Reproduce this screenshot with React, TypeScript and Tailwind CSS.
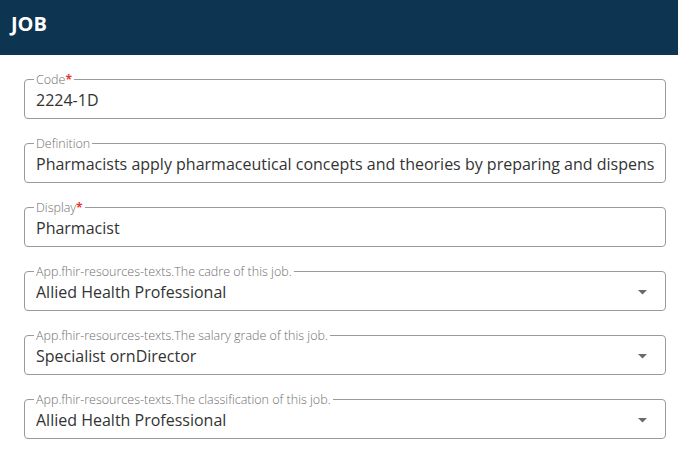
import React from "react";

const font = { fontFamily: '"Open Sans", "Noto Sans", sans-serif' };

function Field({
  label,
  value,
  required,
  select,
}: {
  label: string;
  value: string;
  required?: boolean;
  select?: boolean;
}) {
  return (
    <div className="relative h-[40px] rounded-[4px] border border-[#9a9a9a]">
      <div className="absolute left-[9px] -top-[6px] bg-white px-[2px] text-[12.5px] leading-[12px] font-light text-[#6f6f6f] whitespace-nowrap">
        {label}
        {required && <span className="text-[#e53935] font-bold text-[12px]">*</span>}
      </div>
      <div className={`flex items-center h-full pl-[11px] pt-[2px] ${select ? "pr-[18px]" : "pr-[10px]"}`}>
        <div className="flex-1 whitespace-nowrap overflow-hidden text-[16px] text-[#333] leading-[20px]">
          {value}
        </div>
        {select && (
          <svg width="9" height="5" viewBox="0 0 9 5" className="ml-[8px]">
            <path d="M0 0 L9 0 L4.5 4.5 Z" fill="#6a6a6a" />
          </svg>
        )}
      </div>
    </div>
  );
}

export default function App() {
  return (
    <div className="w-[678px] h-[473px] bg-white overflow-hidden" style={font}>
      <div className="h-[55px] bg-[#0d3451] flex items-center px-[11px]">
        <span className="text-white font-bold text-[20px] leading-[24px] -mt-[8px]">JOB</span>
      </div>
      <div className="pl-[24px] pr-[12px] pt-[24px] flex flex-col gap-[24px]">
        <Field label="Code" value="2224-1D" required />
        <Field
          label="Definition"
          value="Pharmacists apply pharmaceutical concepts and theories by preparing and dispensing or selling medicaments and other products"
        />
        <Field label="Display" value="Pharmacist" required />
        <Field label="App.fhir-resources-texts.The cadre of this job." value="Allied Health Professional" select />
        <Field label="App.fhir-resources-texts.The salary grade of this job." value="Specialist ornDirector" select />
        <Field label="App.fhir-resources-texts.The classification of this job." value="Allied Health Professional" select />
      </div>
    </div>
  );
}
